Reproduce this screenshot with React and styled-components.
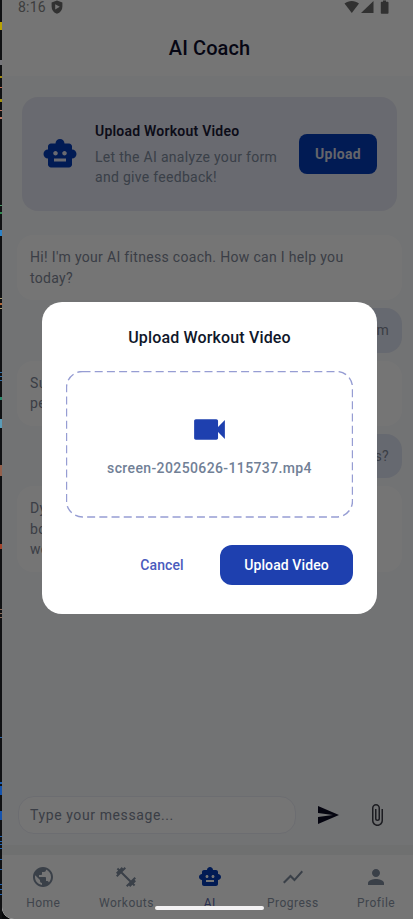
import React from "react";
import styled, { createGlobalStyle, css } from "styled-components";
import {
  MdSmartToy, MdPublic, MdFitnessCenter, MdShowChart, MdPerson,
  MdSend, MdAttachFile, MdVideocam,
} from "react-icons/md";

const Global = createGlobalStyle`
  * { box-sizing: border-box; }
  body { margin: 0; background: #08090b; overflow: hidden; }
  button { border: 0; padding: 0; font: inherit; letter-spacing: inherit; cursor: pointer; }
  svg { display: block; flex: none; }
`;

const Frame = styled.div`
  position: relative;
  display: flex;
  width: 413px;
  height: 919px;
  font-family: Roboto, "Liberation Sans", sans-serif;
`;

const Edge = styled.svg`
  width: 2px;
  height: 919px;
`;

const Phone = styled.div`
  flex: 1;
  display: flex;
  flex-direction: column;
  background: #f8fafc;
  border-bottom-left-radius: 12px;
  overflow: hidden;
`;

const StatusBar = styled.div`
  display: flex;
  justify-content: space-between;
  height: 20px;
  padding: 0 24px 0 16px;
  background: #fff;
  color: #6b6b6b;
`;

const StatusGroup = styled.div`
  display: flex;
  align-items: flex-start;
  gap: 5px;
`;

const Clock = styled.span`
  color: #858585;
  font-size: 14px;
  line-height: 15px;
  letter-spacing: 0.2px;
`;

const Header = styled.header`
  height: 56px;
  padding-left: 4px;
  background: #fff;
  color: #0f0f2d;
  font-size: 20px;
  font-weight: 500;
  line-height: 57px;
  text-align: center;
  letter-spacing: 0.1px;
`;

const Promo = styled.section`
  display: flex;
  align-items: center;
  height: 114px;
  margin: 21px 16px 0 20px;
  padding: 0 20px;
  border-radius: 16px;
  background: #e5e7f3;
  color: #033bb8;
`;

const PromoText = styled.div`
  flex: 1;
  margin: 0 0 0 17px;
  color: #7e8b9e;
  font-size: 14px;
  line-height: 20px;
  letter-spacing: 0.3px;
  white-space: nowrap;
`;

const PromoTitle = styled.div`
  margin-bottom: 6px;
  color: #1c1c38;
  font-weight: 600;
  letter-spacing: 0.22px;
`;

const PromoButton = styled.button`
  width: 78px;
  height: 40px;
  border-radius: 8px;
  background: #033bb8;
  color: #dcdce6;
  font-size: 14px;
  font-weight: 700;
  letter-spacing: 0.35px;
`;

const Messages = styled.div`
  flex: 1;
  display: flex;
  flex-direction: column;
  gap: 8px;
  padding: 24px 11px 0 15px;
`;

const Bubble = styled.div`
  padding: 12px 13px;
  border-radius: 16px;
  background: #fff;
  color: #7f8898;
  font-size: 14px;
  line-height: 20.5px;
  letter-spacing: 0.32px;
  white-space: pre-line;
  ${(p) => p.$mine && css`
    align-self: flex-end;
    height: 44.5px;
    background: #dfe4f3;
  `}
`;

const Composer = styled.div`
  display: flex;
  align-items: center;
  height: 38px;
  margin: 0 22px 11px 16px;
  color: #0b0b24;
`;

const Input = styled.div`
  width: 278px;
  height: 38px;
  margin-right: 20px;
  padding-left: 11px;
  border: 1px solid #ebedf6;
  border-radius: 16px;
  background: #fff;
  color: #7f8898;
  font-size: 14px;
  line-height: 36px;
  letter-spacing: 0.6px;
`;

const Attach = styled.div`
  margin-left: 25px;
  color: #3d3e48;
`;

const NavShade = styled.div`
  height: 10px;
  background: #f2f4f5;
`;

const NavBar = styled.nav`
  display: flex;
  height: 64px;
  background: #fff;
`;

const NavItem = styled.div`
  flex: 0 0 83.2px;
  display: flex;
  flex-direction: column;
  align-items: center;
  margin-left: -0.3px;
  margin-right: 0.3px;
  padding-top: 10px;
  color: ${(p) => (p.$active ? "#033bb8" : "#7e8b9e")};
`;

const NavLabel = styled.span`
  margin-top: 6px;
  color: ${(p) => (p.$active ? "#5763a8" : "#8a95a6")};
  font-size: 12px;
  line-height: 16px;
  letter-spacing: 0.5px;
`;

const Scrim = styled.div`
  position: absolute;
  inset: 0 0 0 2px;
  display: flex;
  flex-direction: column;
  align-items: flex-start;
  padding: 302px 0 0 40px;
  border-bottom-left-radius: 12px;
  background: rgba(0, 0, 0, 0.54);
`;

const Dialog = styled.div`
  display: flex;
  flex-direction: column;
  width: 335px;
  height: 311.5px;
  padding: 24px;
  border-radius: 20px;
  background: #fff;
`;

const DialogTitle = styled.h2`
  margin: 0 0 21px;
  color: #0f172a;
  font-size: 16px;
  font-weight: 500;
  line-height: 24px;
  text-align: center;
  letter-spacing: 0.15px;
`;

const DropZone = styled.div`
  position: relative;
  display: flex;
  flex-direction: column;
  align-items: center;
  height: 147px;
  padding-top: 38px;
  color: #1e40af;
`;

const DashedOutline = styled.svg`
  position: absolute;
  inset: 0;
`;

const FileName = styled.span`
  margin-top: 8px;
  color: #718096;
  font-size: 14px;
  font-weight: 500;
  line-height: 20px;
  letter-spacing: 0.38px;
`;

const Actions = styled.div`
  display: flex;
  justify-content: flex-end;
  gap: 12px;
  margin-top: 27px;
`;

const DialogButton = styled.button`
  width: ${(p) => (p.$primary ? 133 : 92)}px;
  height: 40px;
  border-radius: 12px;
  background: ${(p) => (p.$primary ? "#1e40af" : "transparent")};
  color: ${(p) => (p.$primary ? "#fff" : "#4a5bbd")};
  font-size: 14px;
  font-weight: 500;
  letter-spacing: 0.1px;
`;

const HomeIndicator = styled.div`
  position: absolute;
  left: 155px;
  top: 906px;
  width: 109px;
  height: 4px;
  border-radius: 2px;
  background: #f3f2f3;
`;

const edgeMarks = [
  [22, 8, "#b9a200"], [60, 5, "#77777b"], [76, 2, "#a08a10"], [87, 1, "#c66a50"],
  [99, 3, "#a39310"], [110, 1, "#b87460"], [117, 2, "#b87460"],
  [205, 1, "#4a9a68"], [212, 2, "#2f8a50"], [230, 6, "#2d83c9"],
  [298, 1, "#a89a70"], [303, 2, "#b46a3a"], [308, 1, "#a89a70"],
  [372, 1, "#2f6ea8"], [376, 1, "#2f6ea8"], [380, 1, "#2f6ea8"], [397, 3, "#2a8a6c"],
  [419, 9, "#5a9cb8"], [465, 11, "#94604c"], [544, 5, "#a5452c"],
  [609, 1, "#8a6a58"], [613, 1, "#8a6a58"], [617, 1, "#8a6a58"],
  [737, 1, "#2a62a8"], [782, 2, "#1c5cb0"], [786, 9, "#1453ae"], [811, 9, "#1453ae"],
  [836, 1, "#2264b4"], [841, 1, "#2264b4"], [844, 1, "#2264b4"], [848, 1, "#2264b4"],
  [859, 1, "#2264b4"], [869, 1, "#2264b4"], [884, 1, "#2264b4"], [889, 1, "#2264b4"], [894, 1, "#2264b4"],
];

const tabs = [
  ["Home", MdPublic], ["Workouts", MdFitnessCenter], ["AI", MdSmartToy],
  ["Progress", MdShowChart], ["Profile", MdPerson],
];

const messages = [
  { text: "Hi! I'm your AI fitness coach. How can I help you\ntoday?" },
  { text: "form", mine: true },
  { text: "Sure\nper" },
  { text: "ups?", mine: true },
  { text: "Dyn\nbod\nwo" },
];

const ShieldIcon = () => (
  <svg width="12" height="14" viewBox="0 0 12 14">
    <path fill="currentColor" fillRule="evenodd" d="M6 .5 11.4 2.5v4c0 3.6-2 6.1-5.4 7.3C2.6 12.6.6 10.1.6 6.5v-4ZM4.200 4.200v5.200L8.800 6.800Z" />
  </svg>
);

const SignalIcons = () => (
  <svg width="45" height="14" viewBox="0 0 45 14">
    <g fill="currentColor">
      <path d="M.5 3.600C4.500.2 11 .2 15 3.600L7.800 13Z" />
      <path d="M29.500 1v12H17Z" />
      <path d="M39 .5h3v1.200h1.800q.7 0 .7.700v10.600q0 .7-.7.700h-6.300q-.7 0-.7-.7V2.400q0-.7.7-.7H39Z" />
    </g>
  </svg>
);

export default function App() {
  return (
    <Frame>
      <Global />
      <Edge viewBox="0 0 2 919" shapeRendering="crispEdges">
        <rect width="2" height="919" fill="#101113" />
        {edgeMarks.map(([y, h, fill]) => (
          <rect key={y} y={y} width="2" height={h} fill={fill} />
        ))}
      </Edge>
      <Phone>
        <StatusBar>
          <StatusGroup><Clock>8:16</Clock><ShieldIcon /></StatusGroup>
          <SignalIcons />
        </StatusBar>
        <Header>AI Coach</Header>
        <Promo>
          <MdSmartToy size={36} />
          <PromoText>
            <PromoTitle>Upload Workout Video</PromoTitle>
            Let the AI analyze your form<br />and give feedback!
          </PromoText>
          <PromoButton>Upload</PromoButton>
        </Promo>
        <Messages>
          {messages.map((m) => (
            <Bubble key={m.text} $mine={m.mine}>{m.text}</Bubble>
          ))}
        </Messages>
        <Composer>
          <Input>Type your message...</Input>
          <MdSend size={24} />
          <Attach><MdAttachFile size={24} /></Attach>
        </Composer>
        <NavShade />
        <NavBar>
          {tabs.map(([label, Icon]) => (
            <NavItem key={label} $active={label === "AI"}>
              <Icon size={24} />
              <NavLabel $active={label === "AI"}>{label}</NavLabel>
            </NavItem>
          ))}
        </NavBar>
      </Phone>
      <Scrim>
        <Dialog>
          <DialogTitle>Upload Workout Video</DialogTitle>
          <DropZone>
            <DashedOutline width="287" height="147" viewBox="0 0 287 147">
              <rect x=".5" y=".5" width="286" height="145.5" rx="16" fill="none"
                stroke="#969dd3" strokeWidth="1.400" strokeDasharray="8 4.200" />
            </DashedOutline>
            <MdVideocam size={41} />
            <FileName>screen-20250626-115737.mp4</FileName>
          </DropZone>
          <Actions>
            <DialogButton>Cancel</DialogButton>
            <DialogButton $primary>Upload Video</DialogButton>
          </Actions>
        </Dialog>
      </Scrim>
      <HomeIndicator />
    </Frame>
  );
}
